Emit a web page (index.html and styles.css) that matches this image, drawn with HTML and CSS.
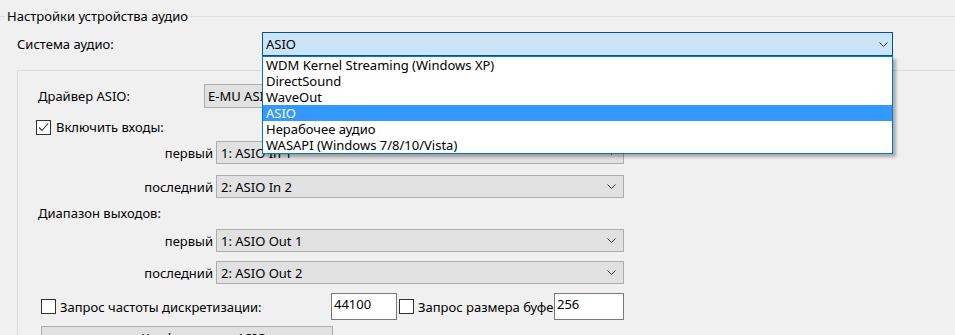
FILE: index.html
```html
<!DOCTYPE html>
<html lang="ru">
<head>
    <meta charset="UTF-8">
    <title>Настройки устройства аудио</title>
    <link rel="stylesheet" href="styles.css">
</head>
<body>
    <fieldset class="group">
        <legend>Настройки устройства аудио</legend>

        <!-- Audio system selector, shown with its list open -->
        <div class="system-row">
            <span class="system-label">Система аудио:</span>
            <div class="combo combo-open">
                <span>ASIO</span>
                <svg class="chev" width="9" height="5" viewBox="0 0 9 5"><path d="M0.5 0.5 L4.5 4.5 L8.5 0.5" fill="none" stroke="#333" stroke-width="1"/></svg>
                <ul class="dropdown">
                    <li>WDM Kernel Streaming (Windows XP)</li>
                    <li>DirectSound</li>
                    <li>WaveOut</li>
                    <li class="selected">ASIO</li>
                    <li>Нерабочее аудио</li>
                    <li>WASAPI (Windows 7/8/10/Vista)</li>
                </ul>
            </div>
        </div>

        <!-- ASIO specific settings -->
        <div class="panel">
            <div class="driver-row">
                <span class="driver-label">Драйвер ASIO:</span>
                <div class="combo driver-combo">
                    <span>E-MU ASIO</span>
                    <svg class="chev" width="9" height="5" viewBox="0 0 9 5"><path d="M0.5 0.5 L4.5 4.5 L8.5 0.5" fill="none" stroke="#333" stroke-width="1"/></svg>
                </div>
            </div>

            <div class="check-row">
                <span class="checkbox">
                    <svg width="13" height="13" viewBox="0 0 13 13"><path d="M2 6.5 L5 9.5 L11 2.5" fill="none" stroke="#333" stroke-width="1.1"/></svg>
                </span>
                <span>Включить входы:</span>
            </div>

            <div class="range-row in-first">
                <span class="range-label">первый</span>
                <div class="combo range-combo">
                    <span>1: ASIO In 1</span>
                    <svg class="chev" width="9" height="5" viewBox="0 0 9 5"><path d="M0.5 0.5 L4.5 4.5 L8.5 0.5" fill="none" stroke="#333" stroke-width="1"/></svg>
                </div>
            </div>
            <div class="range-row in-last">
                <span class="range-label">последний</span>
                <div class="combo range-combo">
                    <span>2: ASIO In 2</span>
                    <svg class="chev" width="9" height="5" viewBox="0 0 9 5"><path d="M0.5 0.5 L4.5 4.5 L8.5 0.5" fill="none" stroke="#333" stroke-width="1"/></svg>
                </div>
            </div>

            <div class="section-title">Диапазон выходов:</div>

            <div class="range-row out-first">
                <span class="range-label">первый</span>
                <div class="combo range-combo">
                    <span>1: ASIO Out 1</span>
                    <svg class="chev" width="9" height="5" viewBox="0 0 9 5"><path d="M0.5 0.5 L4.5 4.5 L8.5 0.5" fill="none" stroke="#333" stroke-width="1"/></svg>
                </div>
            </div>
            <div class="range-row out-last">
                <span class="range-label">последний</span>
                <div class="combo range-combo">
                    <span>2: ASIO Out 2</span>
                    <svg class="chev" width="9" height="5" viewBox="0 0 9 5"><path d="M0.5 0.5 L4.5 4.5 L8.5 0.5" fill="none" stroke="#333" stroke-width="1"/></svg>
                </div>
            </div>

            <div class="request-row">
                <span class="checkbox"></span>
                <span class="rate-label">Запрос частоты дискретизации:</span>
                <div class="edit rate-edit">44100</div>
                <span class="checkbox block-check"></span>
                <span class="block-label">Запрос размера буфера:</span>
                <div class="edit block-edit">256</div>
            </div>

            <div class="config-btn">Конфигурация ASIO...</div>
        </div>
    </fieldset>
</body>
</html>
```

FILE: styles.css
```css
body {
    margin: 0;
    height: 335px;
    overflow: hidden;
    background: #f0f0f0;
    font-family: "Noto Sans", sans-serif;
    font-size: 13px;
    line-height: 16px;
    color: #000;
    white-space: nowrap;
}
.group {
    margin: 8px 0 0;
    padding: 0;
    border: 0;
    border-top: 1px solid #dcdcdc;
    min-width: 0;
}
legend {
    margin-left: 5px;
    padding: 0 2px;
}
.system-row {
    display: flex;
    align-items: center;
    margin-top: 8px;
}
.system-label {
    width: 245px;
    margin-left: 17px;
}
.combo {
    display: flex;
    align-items: center;
    justify-content: space-between;
    box-sizing: border-box;
    border: 1px solid #adadad;
    background: #e1e1e1;
    padding: 0 7px 0 4px;
    overflow: hidden;
}
.combo-open {
    position: relative;
    overflow: visible;
    width: 631px;
    height: 24px;
    padding: 0 4px 0 3px;
    background: #cce4f7;
    border-color: #005499;
}
.dropdown {
    position: absolute;
    left: -1px;
    right: -1px;
    top: calc(100% + 1px);
    margin: 0;
    padding: 0;
    list-style: none;
    background: #fff;
    border: 1px solid #0078d7;
    box-shadow: 3px 3px 3px rgba(0, 0, 0, 0.3);
    z-index: 2;
}
.dropdown li {
    height: 16px;
    padding-left: 3px;
}
.dropdown .selected {
    background: #3399ff;
    color: #fff;
}
.panel {
    margin: 14px 0 0 17px;
    height: 300px;
    border-top: 1px solid #dcdcdc;
    border-left: 1px solid #dcdcdc;
}
.driver-row {
    display: flex;
    align-items: center;
    margin-top: 13px;
    padding-left: 20px;
}
.driver-label {
    width: 166px;
}
.driver-combo {
    width: 420px;
    height: 24px;
    padding-left: 3px;
}
.check-row {
    display: flex;
    align-items: center;
    gap: 5px;
    margin: 11px 0 0 18px;
}
.checkbox {
    display: flex;
    align-items: center;
    justify-content: center;
    box-sizing: border-box;
    width: 15px;
    height: 15px;
    border: 1px solid #333;
    background: #fff;
}
.range-row {
    display: flex;
    align-items: center;
}
.in-first { margin-top: 6px; }
.in-last { margin-top: 11px; }
.out-first { margin-top: 8px; }
.out-last { margin-top: 9px; }
.range-label {
    width: 195px;
    margin-right: 3px;
    text-align: right;
}
.range-combo {
    width: 408px;
    height: 23px;
}
.section-title {
    margin-top: 7px;
    padding-left: 20px;
}
.request-row {
    display: flex;
    align-items: center;
    height: 27px;
    margin: 9px 0 0 23px;
}
.rate-label {
    width: 271px;
    margin-left: 4px;
}
.edit {
    align-self: stretch;
    box-sizing: border-box;
    border: 1px solid #7a7a7a;
    background: #fff;
    padding: 2px 2px 0;
}
.rate-edit {
    width: 66px;
}
.block-check {
    margin-left: 2px;
}
.block-label {
    width: 136px;
    margin-left: 4px;
    overflow: hidden;
}
.block-edit {
    width: 70px;
}
.config-btn {
    box-sizing: border-box;
    width: 292px;
    height: 24px;
    margin: 6px 0 0 23px;
    padding-left: 44px;
    border: 1px solid #adadad;
    background: #e1e1e1;
    text-align: center;
    line-height: 22px;
}
```
